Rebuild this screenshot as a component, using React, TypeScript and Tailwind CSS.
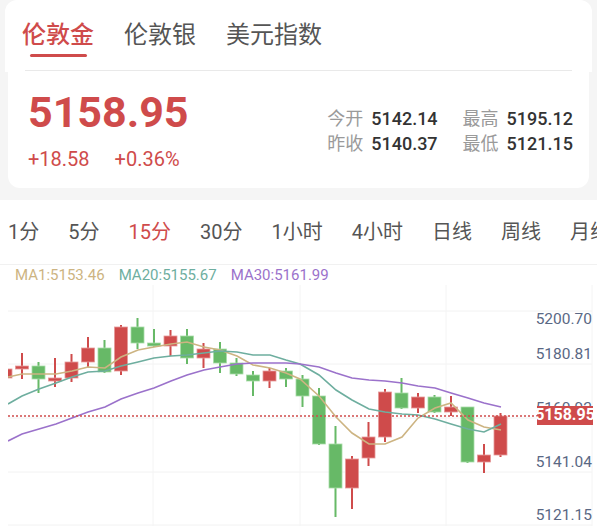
import React from 'react';

const RED = '#cf4b4b';
const GREEN = '#67b967';

// candle geometry measured in page pixels: [bodyTop, bodyBottom, wickTop, wickBottom, rising]
const candles: [number, number, number, number, boolean][] = [
    [369, 378, 366, 381, true],
    [366, 369, 353, 379, true],
    [366, 379, 362, 393, false],
    [378, 381, 358, 387, true],
    [362, 378, 354, 382, true],
    [348, 362, 337, 368, true],
    [348, 372, 340, 373, false],
    [327, 371, 325, 375, true],
    [327, 343, 318, 349, false],
    [343, 346, 329, 347, false],
    [336, 346, 330, 356, true],
    [336, 358, 329, 364, false],
    [349, 358, 343, 368, true],
    [349, 363, 342, 373, false],
    [363, 374, 358, 376, false],
    [375, 381, 371, 396, false],
    [371, 381, 368, 388, true],
    [371, 379, 368, 387, false],
    [379, 396, 375, 407, false],
    [396, 444, 388, 445, false],
    [444, 488, 426, 517, false],
    [459, 488, 456, 509, true],
    [437, 458, 422, 466, true],
    [392, 437, 389, 442, true],
    [393, 408, 378, 409, false],
    [397, 408, 393, 413, true],
    [397, 412, 395, 413, false],
    [407, 412, 396, 416, true],
    [407, 462, 407, 463, false],
    [455, 462, 444, 473, true],
    [416, 455, 413, 457, true],
];

const ma1 =
    '8,377 22,374 39,374 56,374 72,371 88,367 105,368 121,357 138,350 154,347 171,344 187,342 204,347 220,350 237,356 253,365 270,368 286,373 300,379 319,396 336,417 352,433 369,444 385,444 402,437 418,418 435,408 451,403 468,420 484,427 501,430';
const ma20 =
    '8,404 22,396 39,389 56,383 72,377 88,372 105,371 121,366 138,362 154,358 171,356 187,355 204,353 220,351 237,352 253,355 270,355 286,360 300,364 319,375 336,390 352,400 369,409 385,412 402,414 418,415 435,419 451,424 468,429 484,432 501,424';
const ma30 =
    '8,441 22,434 39,429 56,424 72,418 88,412 105,407 121,399 138,393 154,388 171,381 187,375 204,370 220,367 237,364 253,363 270,363 286,363 300,364 319,367 336,373 352,378 369,380 385,381 402,383 418,386 435,388 451,393 468,398 484,403 501,407';

const axis = [
    { v: '5200.70', y: 320 },
    { v: '5180.81', y: 355 },
    { v: '5160.92', y: 409 },
    { v: '5141.04', y: 463 },
    { v: '5121.15', y: 516 },
];

const periods = ['1分', '5分', '15分', '30分', '1小时', '4小时', '日线', '周线', '月线'];

const KChart = () => (
    <svg width={597} height={241} viewBox="0 285 597 241" className="block">
        <defs>
            <clipPath id="plot">
                <rect x={8} y={285} width={530} height={241} />
            </clipPath>
        </defs>
        {[311, 364, 418, 472, 525].map((y) => (
            <line key={y} x1={8} x2={592} y1={y} y2={y} stroke="#f2f2f2" strokeWidth={1} />
        ))}
        {[153, 300, 446, 592].map((x) => (
            <line key={x} x1={x} x2={x} y1={285} y2={526} stroke="#f4f4f4" strokeWidth={1} />
        ))}
        <g clipPath="url(#plot)">
            {candles.map(([bt, bb, wt, wb, up], i) => {
                const cx = 5.5 + 16.5 * i;
                const color = up ? RED : GREEN;
                return (
                    <g key={i}>
                        <rect x={cx - 1} y={wt} width={2} height={wb - wt} fill={color} />
                        <rect
                            x={cx - 6.5}
                            y={bt}
                            width={13}
                            height={Math.max(bb - bt, 2.5)}
                            fill={color}
                            stroke={up ? '#e59a9a' : '#a9dca9'}
                            strokeWidth={0.8}
                        />
                    </g>
                );
            })}
            <polyline points={ma1} fill="none" stroke="#cdb482" strokeWidth={1.6} />
            <polyline points={ma20} fill="none" stroke="#6eae9f" strokeWidth={1.6} />
            <polyline points={ma30} fill="none" stroke="#9b72cb" strokeWidth={1.6} />
        </g>
        <line x1={8} x2={537} y1={416} y2={416} stroke={RED} strokeWidth={1.5} strokeDasharray="2 2" />
        {axis.map((a) => (
            <text
                key={a.v}
                x={592}
                y={a.y}
                textAnchor="end"
                dominantBaseline="middle"
                fill="#5a6884"
                fontSize={15.5}
                fontFamily="Roboto, sans-serif"
            >
                {a.v}
            </text>
        ))}
        <rect x={537} y={406} width={56} height={19} fill={RED} />
        <text
            x={565}
            y={416}
            textAnchor="middle"
            dominantBaseline="middle"
            fill="#ffffff"
            fontSize={16}
            fontWeight={700}
            fontFamily="Roboto, sans-serif"
        >
            5158.95
        </text>
    </svg>
);

export default function App() {
    return (
        <div className="w-[597px] h-[526px] overflow-hidden bg-[#f5f5f5] font-['Roboto','Noto_Sans_CJK_SC',sans-serif]">
            <div className="mx-[5px] bg-white rounded-t-[12px] h-[72px] flex flex-col">
                <div className="flex gap-[30px] pl-[17px] h-[70px] items-start pt-[17px]">
                    <div className="flex flex-col items-center">
                        <span className="text-[24px] leading-[36px] font-medium text-[#cf4b4b]">伦敦金</span>
                        <span className="mt-[1px] block w-[57px] h-[3px] rounded-full bg-[#cf4b4b]" />
                    </div>
                    <span className="text-[24px] leading-[36px] text-[#555]">伦敦银</span>
                    <span className="text-[24px] leading-[36px] text-[#555]">美元指数</span>
                </div>
                <div className="mx-[20px] border-t border-[#e9e9e9]" />
            </div>
            <div className="mx-[8px] bg-white rounded-b-[12px] h-[116px] flex items-start justify-between pl-[20px] pr-[16px]">
                <div className="flex flex-col pt-[19px]">
                    <span className="text-[43px] leading-[43px] font-bold text-[#cf4b4b]">5158.95</span>
                    <div className="flex gap-[25px] mt-[13px] text-[20px] leading-[24px] text-[#cf4b4b]">
                        <span>+18.58</span>
                        <span>+0.36%</span>
                    </div>
                </div>
                <div className="grid grid-cols-[auto_auto] gap-x-[25px] pt-[34px] text-[18px] leading-[25px]">
                    {[
                        ['今开', '5142.14'],
                        ['最高', '5195.12'],
                        ['昨收', '5140.37'],
                        ['最低', '5121.15'],
                    ].map(([k, v]) => (
                        <div key={k} className="flex gap-[8px]">
                            <span className="text-[#9a9a9a]">{k}</span>
                            <span className="text-[#333] font-medium">{v}</span>
                        </div>
                    ))}
                </div>
            </div>
            <div className="mt-[12px] bg-white">
                <div className="h-[65px] flex items-center gap-[29px] pl-[8px] whitespace-nowrap text-[20px] border-b border-[#f1f1f1]">
                    {periods.map((p) => (
                        <span key={p} className={p === '15分' ? 'text-[#cf4b4b]' : 'text-[#555]'}>
                            {p}
                        </span>
                    ))}
                </div>
                <div className="h-[20px] flex items-center gap-[14px] pl-[15px] text-[15px] leading-none">
                    <span className="text-[#cdb482]">MA1:5153.46</span>
                    <span className="text-[#6eae9f]">MA20:5155.67</span>
                    <span className="text-[#9b72cb]">MA30:5161.99</span>
                </div>
                <KChart />
            </div>
        </div>
    );
}
